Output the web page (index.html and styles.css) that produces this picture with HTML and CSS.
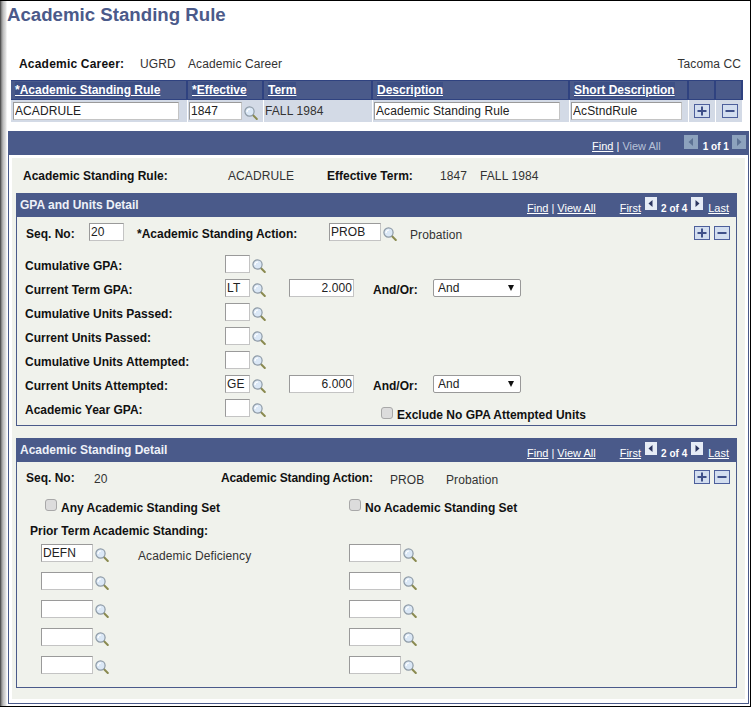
FILE: index.html
```html
<!DOCTYPE html>
<html lang="en">
<head>
<meta charset="utf-8">
<title>Academic Standing Rule</title>
<link rel="stylesheet" href="styles.css">
</head>
<body>
<svg class="defs" width="0" height="0" aria-hidden="true">
  <symbol id="lens" viewBox="0 0 14 14">
    <path d="M8.6 8.8 L12.8 13" stroke="#8a8a50" stroke-width="2" stroke-linecap="round" fill="none"/>
    <circle cx="5.5" cy="5.5" r="4.6" fill="#dbe8f6" stroke="#8d9aa6" stroke-width="1.2"/>
    <path d="M3 6 A3 3 0 0 1 6 3" stroke="#fff" stroke-width="1.2" fill="none"/>
  </symbol>
  <symbol id="plus" viewBox="0 0 16 14">
    <rect x=".5" y=".5" width="15" height="13" fill="#d3deef" stroke="#4d5f9b"/>
    <path d="M3.5 7H12.5M8 2.5V11.5" stroke="#3f5089" stroke-width="2"/>
  </symbol>
  <symbol id="minus" viewBox="0 0 16 14">
    <rect x=".5" y=".5" width="15" height="13" fill="#d3deef" stroke="#4d5f9b"/>
    <path d="M3.5 7H12.5" stroke="#3f5089" stroke-width="2"/>
  </symbol>
  <symbol id="prev" viewBox="0 0 12 13">
    <rect width="12" height="13" fill="#e6ecf6"/>
    <path d="M7.5 3V10L3.5 6.5Z" fill="#2b3560"/>
  </symbol>
  <symbol id="next" viewBox="0 0 12 13">
    <rect width="12" height="13" fill="#e6ecf6"/>
    <path d="M4.5 3V10L8.5 6.5Z" fill="#2b3560"/>
  </symbol>
  <symbol id="prev-off" viewBox="0 0 14 14">
    <rect width="14" height="14" fill="#8da2bd"/>
    <path d="M9 3V11L4.5 7Z" fill="#5d7294"/>
  </symbol>
  <symbol id="next-off" viewBox="0 0 14 14">
    <rect width="14" height="14" fill="#8da2bd"/>
    <path d="M5 3V11L9.5 7Z" fill="#5d7294"/>
  </symbol>
</svg>

<div class="page">
  <h1 class="title">Academic Standing Rule</h1>

  <div class="career">
    <span class="lbl career-lbl">Academic Career:</span>
    <span class="career-code">UGRD</span>
    <span class="career-name">Academic Career</span>
    <span class="career-inst">Tacoma CC</span>
  </div>

  <div class="rule-grid">
    <div class="gh"><a class="ghlink" href="#">*Academic Standing Rule</a></div>
    <div class="gh"><a class="ghlink" href="#">*Effective</a></div>
    <div class="gh"><a class="ghlink" href="#">Term</a></div>
    <div class="gh"><a class="ghlink" href="#">Description</a></div>
    <div class="gh"><a class="ghlink" href="#">Short Description</a></div>
    <div class="gh"></div>
    <div class="gh"></div>
    <div class="gd"><input class="inp w166" value="ACADRULE"></div>
    <div class="gd gd-tight"><input class="inp w53" value="1847"><svg class="lens"><use href="#lens"/></svg></div>
    <div class="gd gd-text">FALL 1984</div>
    <div class="gd gd-tight"><input class="inp w186" value="Academic Standing Rule"></div>
    <div class="gd gd-tight"><input class="inp w111" value="AcStndRule"></div>
    <div class="gd gd-btn"><svg class="pm"><use href="#plus"/></svg></div>
    <div class="gd gd-btn gd-btn-last"><svg class="pm"><use href="#minus"/></svg></div>
  </div>

  <section class="main">
    <div class="main-bar">
      <a href="#" class="nav-link">Find</a><span class="sep">|</span><span class="nav-off">View All</span>
      <svg class="arrow-off first-off"><use href="#prev-off"/></svg>
      <span class="count">1 of 1</span>
      <svg class="arrow-off"><use href="#next-off"/></svg>
    </div>
    <div class="main-body">
      <div class="summary">
        <span class="lbl sum-a">Academic Standing Rule:</span>
        <span class="sum-b">ACADRULE</span>
        <span class="lbl sum-c">Effective Term:</span>
        <span class="sum-d">1847</span>
        <span class="sum-e">FALL 1984</span>
      </div>

      <section class="sub sub-one">
        <div class="sub-bar">
          <span class="sub-title">GPA and Units Detail</span>
          <span class="sub-nav">
            <a href="#" class="nav-link">Find</a><span class="sep">|</span><a href="#" class="nav-link">View All</a>
            <a href="#" class="nav-link first">First</a>
            <svg class="arrow"><use href="#prev"/></svg>
            <span class="count">2 of 4</span>
            <svg class="arrow"><use href="#next"/></svg>
            <a href="#" class="nav-link last">Last</a>
          </span>
        </div>
        <div class="seq-row">
          <span class="lbl seq-lbl">Seq. No:</span>
          <input class="inp w35" value="20">
          <span class="lbl act-lbl">*Academic Standing Action:</span>
          <input class="inp w52" value="PROB">
          <svg class="lens"><use href="#lens"/></svg>
          <span class="prob">Probation</span>
          <span class="pm-pair"><svg class="pm"><use href="#plus"/></svg><svg class="pm"><use href="#minus"/></svg></span>
        </div>
        <div class="crit">
          <div class="crit-row"><span class="lbl crit-lbl">Cumulative GPA:</span><input class="inp w25"><svg class="lens"><use href="#lens"/></svg></div>
          <div class="crit-row"><span class="lbl crit-lbl">Current Term GPA:</span><input class="inp w25" value="LT"><svg class="lens"><use href="#lens"/></svg><input class="inp num" value="2.000"><span class="lbl andor">And/Or:</span><span class="sel"><select class="sel-in"><option>And</option></select></span></div>
          <div class="crit-row"><span class="lbl crit-lbl">Cumulative Units Passed:</span><input class="inp w25"><svg class="lens"><use href="#lens"/></svg></div>
          <div class="crit-row"><span class="lbl crit-lbl">Current Units Passed:</span><input class="inp w25"><svg class="lens"><use href="#lens"/></svg></div>
          <div class="crit-row"><span class="lbl crit-lbl">Cumulative Units Attempted:</span><input class="inp w25"><svg class="lens"><use href="#lens"/></svg></div>
          <div class="crit-row"><span class="lbl crit-lbl">Current Units Attempted:</span><input class="inp w25" value="GE"><svg class="lens"><use href="#lens"/></svg><input class="inp num" value="6.000"><span class="lbl andor">And/Or:</span><span class="sel"><select class="sel-in"><option>And</option></select></span></div>
          <div class="crit-row"><span class="lbl crit-lbl">Academic Year GPA:</span><input class="inp w25"><svg class="lens"><use href="#lens"/></svg><input type="checkbox" class="chk chk-excl" disabled><span class="lbl excl-lbl">Exclude No GPA Attempted Units</span></div>
        </div>
      </section>

      <section class="sub sub-two">
        <div class="sub-bar">
          <span class="sub-title">Academic Standing Detail</span>
          <span class="sub-nav">
            <a href="#" class="nav-link">Find</a><span class="sep">|</span><a href="#" class="nav-link">View All</a>
            <a href="#" class="nav-link first">First</a>
            <svg class="arrow"><use href="#prev"/></svg>
            <span class="count">2 of 4</span>
            <svg class="arrow"><use href="#next"/></svg>
            <a href="#" class="nav-link last">Last</a>
          </span>
        </div>
        <div class="det-row">
          <span class="lbl det-seq">Seq. No:</span>
          <span class="det-20">20</span>
          <span class="lbl det-act">Academic Standing Action:</span>
          <span class="det-prob">PROB</span>
          <span class="det-name">Probation</span>
          <span class="pm-pair pm-pair-two"><svg class="pm"><use href="#plus"/></svg><svg class="pm"><use href="#minus"/></svg></span>
        </div>
        <div class="chk-row">
          <span class="chk-col"><input type="checkbox" class="chk" disabled><span class="lbl chk-lbl">Any Academic Standing Set</span></span>
          <span class="chk-col"><input type="checkbox" class="chk" disabled><span class="lbl chk-lbl">No Academic Standing Set</span></span>
        </div>
        <div class="lbl prior">Prior Term Academic Standing:</div>
        <div class="prior-grid">
          <div class="pcell"><input class="inp w52" value="DEFN"><svg class="lens"><use href="#lens"/></svg><span class="deficiency">Academic Deficiency</span></div>
          <div class="pcell"><input class="inp w52"><svg class="lens"><use href="#lens"/></svg></div>
          <div class="pcell"><input class="inp w52"><svg class="lens"><use href="#lens"/></svg></div>
          <div class="pcell"><input class="inp w52"><svg class="lens"><use href="#lens"/></svg></div>
          <div class="pcell"><input class="inp w52"><svg class="lens"><use href="#lens"/></svg></div>
          <div class="pcell"><input class="inp w52"><svg class="lens"><use href="#lens"/></svg></div>
          <div class="pcell"><input class="inp w52"><svg class="lens"><use href="#lens"/></svg></div>
          <div class="pcell"><input class="inp w52"><svg class="lens"><use href="#lens"/></svg></div>
          <div class="pcell"><input class="inp w52"><svg class="lens"><use href="#lens"/></svg></div>
          <div class="pcell"><input class="inp w52"><svg class="lens"><use href="#lens"/></svg></div>
        </div>
      </section>
    </div>
  </section>
</div>
</body>
</html>
```
FILE: styles.css
```css
* { box-sizing: border-box; }
html, body { margin: 0; padding: 0; }
body {
  width: 751px;
  height: 707px;
  overflow: hidden;
  background: #fff;
  font-family: "Liberation Sans", Arial, sans-serif;
  font-size: 12px;
  letter-spacing: .1px;
  color: #1f1f3a;
}
.defs { display: block; height: 0; }
.page {
  height: 707px;
  border-top: 1px solid #000;
  border-right: 1px solid #000;
  border-bottom: 1px solid #000;
  background: linear-gradient(to right, #333 0, #777 1px, #bbb 3px, #e4e4e4 6px, #fff 7px);
  padding: 0 1px 2px 8px;
  display: flex;
  flex-direction: column;
}
.title {
  margin: 0 0 0 -1px;
  height: 30px;
  padding-top: 3px;
  font-size: 18.67px;
  line-height: 22px;
  font-weight: bold;
  letter-spacing: 0;
  color: #4b5a8a;
}
.lbl { font-weight: bold; color: #111; white-space: nowrap; letter-spacing: 0; }

.career {
  display: flex;
  align-items: center;
  height: 16px;
  margin-top: 25px;
  padding-left: 11px;
  color: #333;
}
.career-lbl { width: 121px; letter-spacing: .2px; }
.career-code { width: 48px; }
.career-inst { margin-left: auto; margin-right: 8px; }

.rule-grid {
  margin: 8px 0 0 3px;
  width: 732px;
  display: grid;
  grid-template-columns: 177px 76px 109px 197px 119px 27px 27px;
  grid-template-rows: 20px 22px;
}
.gh {
  background: #4a5a8a;
  border: 1px solid #2f4280;
  border-left-width: 0;
  border-right: 2px solid #2f4280;
  padding: 1px 0 0 4px;
  line-height: 16px;
}
.ghlink {
  color: #fff;
  font-weight: bold;
  letter-spacing: 0;
  text-decoration: underline;
  white-space: nowrap;
  background: #3d4f85;
  display: inline-block;
}
.gd {
  background: #d3dae6;
  border-right: 1px solid #fff;
  display: flex;
  align-items: center;
  padding-left: 2px;
}
.gd-tight { padding-left: 1px; }
.gd-text { padding-left: 1px; color: #333; }
.gd-btn { padding-left: 5px; }
.gd-btn-last { padding-left: 6px; }

.inp {
  height: 18px;
  padding: 0 1px 1px;
  font: 12px "Liberation Sans", Arial, sans-serif;
  letter-spacing: .1px;
  color: #222;
  background: #fff;
  border: 1px solid #c4c4c4;
  border-top-color: #9a9a9a;
  border-left-color: #9a9a9a;
  border-radius: 0;
  outline: 0;
  flex: none;
  display: block;
}
.w25 { width: 25px; }
.w35 { width: 35px; }
.w52 { width: 52px; }
.w53 { width: 53px; }
.w111 { width: 111px; }
.w166 { width: 166px; }
.w186 { width: 186px; }
.num { width: 65px; text-align: right; margin-left: 23px; }

.lens { width: 14px; height: 14px; margin: 3px 0 0 2px; flex: none; display: block; }
.pm { width: 16px; height: 14px; display: block; flex: none; }

.main {
  margin-top: 9px;
  flex: 1;
  display: flex;
  flex-direction: column;
  border: 1px solid #4a5a8a;
  border-top: 0;
}
.main-bar {
  height: 24px;
  background: #4a5a8a;
  display: flex;
  align-items: center;
  color: #fff;
  padding-left: 583px;
}
.nav-link { color: #fff; text-decoration: underline; font-size: 11px; letter-spacing: 0; white-space: nowrap; margin-top: 6px; }
.sep { font-size: 11px; margin: 6px 3px 0; color: #fff; }
.nav-off { color: #b8c2d8; font-size: 11px; letter-spacing: 0; white-space: nowrap; margin-top: 6px; }
.count { font-size: 10px; font-weight: bold; letter-spacing: 0; color: #fff; white-space: nowrap; margin-top: 6px; }
.arrow-off { width: 14px; height: 14px; flex: none; margin-top: -3px; }
.first-off { margin-left: 23px; margin-right: 5px; }
.main-bar .count { margin-right: 3px; }
.main-body {
  flex: 1;
  margin: 3px 3px 4px 3px;
  background: #f0f2ec;
  padding: 0 8px 0 4px;
}

.summary {
  display: flex;
  align-items: center;
  height: 31px;
  padding: 5px 0 0 7px;
  color: #333;
}
.sum-a { width: 205px; }
.sum-b { width: 99px; }
.sum-c { width: 113px; }
.sum-d { width: 40px; }

.sub { border: 1px solid #4a5a8a; background: #f0f2ec; width: 721px; }
.sub-one { margin-top: 4px; height: 233px; }
.sub-two { margin-top: 12px; height: 250px; }
.sub-bar {
  height: 24px;
  background: #4a5a8a;
  display: flex;
  align-items: center;
  justify-content: space-between;
  padding: 0 8px 0 4px;
  margin: -1px -1px 0 -1px;
}
.sub-title { color: #eef1f8; font-weight: bold; letter-spacing: 0; }
.sub-nav { display: flex; align-items: center; color: #fff; }
.first { margin-left: 24px; }
.arrow { width: 12px; height: 13px; margin: -3px 4px 0 4px; flex: none; }
.last { margin-left: 1px; }

.seq-row {
  display: flex;
  align-items: center;
  height: 18px;
  margin-top: 6px;
  padding-left: 9px;
}
.seq-lbl { width: 63px; margin-top: 4px; }
.act-lbl { width: 192px; margin-left: 13px; margin-top: 4px; }
.prob { margin-left: 13px; color: #333; margin-top: 6px; }
.pm-pair { display: flex; gap: 4px; margin-left: auto; margin-right: 6px; margin-top: 2px; }
.crit { margin-top: 14px; padding-left: 8px; display: flex; flex-direction: column; gap: 6px; }
.crit-row { display: flex; align-items: center; height: 18px; }
.crit-lbl { width: 200px; margin-top: 4px; }
.andor { margin-left: 19px; margin-top: 4px; width: 60px; }
.sel { position: relative; display: block; width: 88px; height: 18px; flex: none; }
.sel-in {
  appearance: none;
  -webkit-appearance: none;
  width: 100%;
  height: 18px;
  display: block;
  background: #fff;
  border: 1px solid #999;
  border-radius: 2px;
  padding: 0 4px 1px;
  font: 12px "Liberation Sans", Arial, sans-serif;
  color: #222;
}
.sel::after {
  content: "";
  position: absolute;
  right: 7px;
  top: 6px;
  border-left: 3px solid transparent;
  border-right: 3px solid transparent;
  border-top: 6px solid #111;
}
.chk {
  appearance: none;
  -webkit-appearance: none;
  width: 12px;
  height: 12px;
  margin: 0;
  flex: none;
  background: #dcdcdc;
  border: 1px solid #a8a8a8;
  border-radius: 3px;
}
.chk-excl { margin: 9px 4px 0 115px; }
.excl-lbl { margin-top: 14px; }

.det-row {
  display: flex;
  align-items: center;
  height: 16px;
  margin-top: 8px;
  padding-left: 9px;
  color: #333;
}
.det-seq { width: 68px; }
.det-20 { width: 127px; margin-top: 2px; }
.det-act { width: 169px; letter-spacing: -.15px; }
.det-prob { width: 56px; margin-top: 3px; }
.det-name { margin-top: 3px; }
.pm-pair-two { margin-top: -2px; }
.chk-row { display: flex; margin-top: 12px; padding-left: 28px; height: 14px; align-items: center; }
.chk-col { width: 304px; display: flex; align-items: center; gap: 4px; }
.chk-lbl { margin-top: 6px; }
.prior { margin: 12px 0 0 13px; line-height: 14px; }
.prior-grid {
  margin: 6px 0 0 24px;
  display: grid;
  grid-template-columns: 308px 100px;
  row-gap: 10px;
}
.pcell { display: flex; align-items: center; height: 18px; }
.deficiency { margin: 5px 0 0 29px; color: #333; white-space: nowrap; }
```
